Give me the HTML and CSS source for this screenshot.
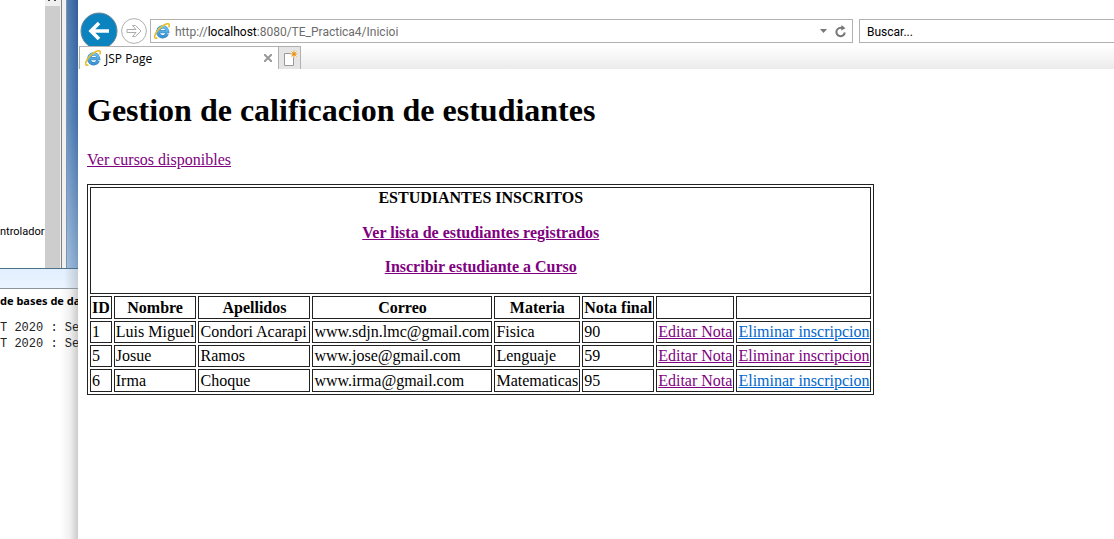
FILE: index.html
```
<!DOCTYPE html>
<html lang="es">
<head>
<meta charset="utf-8">
<title>JSP Page</title>
<link rel="stylesheet" href="styles.css">
</head>
<body>
<svg class="defs" aria-hidden="true">
  <defs>
    <linearGradient id="blue" x1="0" y1="0" x2="0" y2="1"><stop offset="0" stop-color="#6cc4f0"/><stop offset="1" stop-color="#3b93d4"/></linearGradient>
    <symbol id="ie" viewBox="0 0 16 16">
      <path d="M13.2 10.8A4.900 4.900 0 1 1 13.600 8.600H5" fill="none" stroke="#2f7fba" stroke-width="3.400"/>
      <path d="M13.2 10.8A4.900 4.900 0 1 1 13.600 8.600H5" fill="none" stroke="url(#blue)" stroke-width="2.400"/>
      <path d="M3.4 14.8C1 16 .2 14.600 .9 12.200C2 8.300 7.500 2.600 12.200 1C15 .1 16 1.600 14.700 4.300" fill="none" stroke="#e9bd2c" stroke-width="1.600"/>
    </symbol>
  </defs>
</svg>
<div class="desktop">
  <aside class="ide">
    <section class="tree">
      <div class="tree-body"><span class="tree-item">ntrolador</span></div>
      <div class="scroll"><svg class="scroll-end" width="15" height="6"><path d="M4 0V1M10 0V1" stroke="#444" stroke-width="2"/></svg></div>
      <div class="edge"></div>
      <div class="wallpaper"></div>
    </section>
    <section class="output">
      <div class="output-bar"></div>
      <h2 class="output-title">de bases de datos</h2>
      <pre class="log">T 2020 : Ser
T 2020 : Ser</pre>
    </section>
  </aside>
  <main class="browser">
    <header class="toolbar">
      <button class="back" aria-label="Atrás"><svg viewBox="0 0 38 38"><circle cx="19" cy="19" r="18" fill="#0a83bf" stroke="#6d8796"/><path d="M29 19H12M19 11l-8 8 8 8" fill="none" stroke="#fff" stroke-width="3.600"/></svg></button>
      <button class="forward" aria-label="Adelante"><svg viewBox="0 0 26 26"><circle cx="13" cy="13" r="12.400" fill="#fff" stroke="#b0b0b0"/><path d="M6 11.500H15L11.500 7.500H14.500L20 13L14.500 18.500H11.500L15 14.500H6Z" fill="#fff" stroke="#ababab"/></svg></button>
      <div class="address">
        <svg class="ie-icon"><use href="#ie"/></svg>
        <span class="url">http://<b>localhost</b>:8080/TE_Practica4/Inicioi</span>
        <button class="tool" aria-label="Mostrar direcciones"><svg width="7" height="4"><path d="M0 0H7L3.500 4Z" fill="#777"/></svg></button>
        <button class="tool" aria-label="Actualizar"><svg width="12" height="13" viewBox="0 0 12 13"><path d="M7.500 3.200A4.200 4.200 0 1 0 9.800 7.500" fill="none" stroke="#777" stroke-width="2"/><path d="M6.500 0L10.500 3.200L6.200 5.600Z" fill="#777"/></svg></button>
      </div>
      <input class="search" type="text" placeholder="Buscar..." aria-label="Buscar">
    </header>
    <nav class="tabs">
      <div class="tab">
        <svg class="ie-icon"><use href="#ie"/></svg>
        <span class="tab-title">JSP Page</span>
        <button class="close" aria-label="Cerrar pestaña"><svg width="8" height="8"><path d="M0 0L8 8M8 0L0 8" stroke="#999" stroke-width="2"/></svg></button>
      </div>
      <button class="new-tab" aria-label="Nueva pestaña"><svg width="16" height="17"><path d="M2.500 3.500H11.500V15.500H2.500Z" fill="#fff" stroke="#999"/><circle cx="12" cy="4" r="3.500" fill="#ececec"/><path d="M12 .5V7.500M8.500 4H15.500M9.500 1.500L14.500 6.500M14.500 1.500L9.500 6.500" stroke="#efa32c"/><circle cx="12" cy="4" r="1.500" fill="#e98b16"/></svg></button>
    </nav>
    <article class="page">
      <h1>Gestion de calificacion de estudiantes</h1>
      <p><a class="visited" href="#cursos">Ver cursos disponibles</a></p>
      <table class="grades">
        <thead>
          <tr><th class="banner" colspan="8">ESTUDIANTES INSCRITOS
            <p><a class="visited" href="#lista">Ver lista de estudiantes registrados</a></p>
            <p><a class="visited" href="#inscribir">Inscribir estudiante a Curso</a></p></th></tr>
          <tr><th>ID</th><th>Nombre</th><th class="surname">Apellidos</th><th class="mail">Correo</th><th>Materia</th><th>Nota final</th><th></th><th></th></tr>
        </thead>
        <tbody>
          <tr><td>1</td><td>Luis Miguel</td><td>Condori Acarapi</td><td>www.sdjn.lmc@gmail.com</td><td>Fisica</td><td>90</td><td><a class="visited" href="#e1">Editar Nota</a></td><td><a href="#d1">Eliminar inscripcion</a></td></tr>
          <tr><td>5</td><td>Josue</td><td>Ramos</td><td>www.jose@gmail.com</td><td>Lenguaje</td><td>59</td><td><a class="visited" href="#e5">Editar Nota</a></td><td><a class="visited" href="#d5">Eliminar inscripcion</a></td></tr>
          <tr><td>6</td><td>Irma</td><td>Choque</td><td>www.irma@gmail.com</td><td>Matematicas</td><td>95</td><td><a class="visited" href="#e6">Editar Nota</a></td><td><a href="#d6">Eliminar inscripcion</a></td></tr>
        </tbody>
      </table>
    </article>
  </main>
</div>
</body>
</html>
```
FILE: styles.css
```
* { box-sizing: border-box; }
body { margin: 0; background: #fff; color: #000; }
button { border: 0; padding: 0; background: none; display: flex; align-items: center; justify-content: center; }
.defs { position: absolute; width: 0; height: 0; }
.desktop { display: grid; grid-template-columns: 78px minmax(0, 1fr); min-height: 100vh; }

.ide { display: flex; flex-direction: column; overflow: hidden; }
.tree { display: grid; grid-template-columns: 45px 16px 5px 12px; height: 268px; }
.tree-body { padding-top: 223px; }
.tree-item { display: block; font: 11px/18px Roboto, sans-serif; }
.scroll { background: #cdcdcd; border-right: 1px solid #eee; }
.scroll-end { display: block; background: #f0f0f0; }
.edge { background: #f0f0f0; border-left: 1px solid #808080; }
.wallpaper { border-left: 1px solid #8093a9; background: linear-gradient(90deg, rgba(255,255,255,.15), rgba(0,30,80,.12)), linear-gradient(#3568a5, #4c7db6 45%, #91b2d7); }
.output { flex: 1; background: linear-gradient(90deg, transparent 60px, #f0f0f0 70px, #ccc); }
.output-bar { height: 21px; border-top: 1px solid #4f7188; border-bottom: 1px solid #8c959e; background: linear-gradient(90deg, transparent 64px, rgba(0,0,0,.15)), linear-gradient(#e2effd, #eaf4ff); }
.output-title { margin: 3px 0 10px; font: bold 11px/18px "Noto Sans", sans-serif; white-space: nowrap; }
.log { margin: 0; font: 12px/16px "Liberation Mono", monospace; color: #222; }

.browser { background: #fff; min-width: 0; }
.toolbar { display: grid; grid-template-columns: 38px 26px minmax(0, 709fr) minmax(0, 261fr); align-items: center; height: 46px; padding: 12px 0 0 2px; font: 12px/16px Roboto, sans-serif; }
.back { width: 38px; height: 38px; }
.forward { width: 26px; height: 26px; margin-left: 3px; }
.back svg, .forward svg { width: 100%; height: 100%; overflow: visible; }
.address { display: flex; align-items: center; height: 24px; margin-left: 6px; padding: 0 5px 0 3px; border: 1px solid #b1b1b1; }
.ie-icon { width: 16px; height: 16px; flex: none; }
.url { flex: 1; margin-left: 5px; padding-top: 1px; color: #6c6c6c; white-space: nowrap; }
.url b { font-weight: normal; color: #000; }
.tool { margin-left: 8px; }
.search { width: auto; min-width: 0; height: 24px; margin-left: 6px; padding: 1px 7px 0; border: 1px solid #b1b1b1; border-right: 0; border-radius: 0; font: inherit; }
.search::placeholder { color: #000; opacity: 1; }
.tabs { position: relative; display: flex; height: 23px; padding-left: 1px; background: linear-gradient(#fff, #ebebeb); }
.tab { display: flex; align-items: center; width: 199px; padding: 0 6px 0 5px; border: 1px solid #b1b1b1; border-width: 1px 0 0 1px; background: #fff; font: 12px/16px "Open Sans", sans-serif; }
.tab-title { flex: 1; margin-left: 4px; padding-top: 1px; }
.new-tab { width: 23px; border: 1px solid #b1b1b1; border-bottom: 0; background: #e5e5e5; }

.page { padding: 21px 9px; font: 16px/18px "Liberation Serif", serif; }
.page h1 { margin: 0; font: bold 32px/40px "Liberation Serif", serif; }
.page p { margin: 16px 0; }
.page h1 + p { margin: 21px 0 15px; }
.page a { color: #0066cc; }
.page .visited { color: #800080; }
.grades { border: 1px solid #222; border-spacing: 2px; white-space: nowrap; }
.grades th, .grades td { padding: 1px; border: 1px solid #222; height: 22px; }
.grades th { height: 23px; }
.grades .banner p:first-of-type { margin-top: 17px; }
.grades tr:last-child td { height: 23px; }
.grades .surname { min-width: 112px; }
.grades .mail { min-width: 180px; }
```
